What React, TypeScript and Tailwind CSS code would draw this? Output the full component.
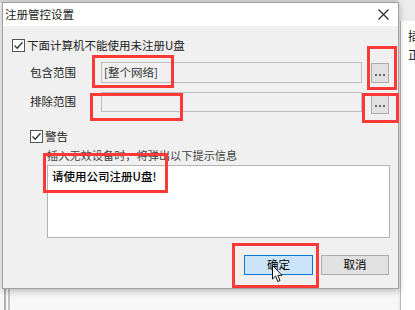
import React from "react";

const font = { fontFamily: '"Noto Sans CJK SC", "Noto Sans", sans-serif' };

function CheckBox() {
  return (
    <span className="flex h-[13px] w-[13px] shrink-0 items-center justify-center border border-[#555] bg-white">
      <svg width="11" height="11" viewBox="0 0 11 11">
        <path d="M1.5 5.5 L4.2 8.3 L9.5 2.2" fill="none" stroke="#333" strokeWidth="1.3" />
      </svg>
    </span>
  );
}

function DotsButton({ className }: { className: string }) {
  return (
    <div
      className={`flex w-[18px] shrink-0 items-end justify-center gap-[2px] border border-[#adadad] bg-[#e1e1e1] pb-[6px] ${className}`}
    >
      <span className="h-[2px] w-[2px] bg-[#666]" />
      <span className="h-[2px] w-[2px] bg-[#666]" />
      <span className="h-[2px] w-[2px] bg-[#666]" />
    </div>
  );
}

function RedBox({ className }: { className: string }) {
  return <div className={`pointer-events-none absolute border-[3px] border-[#ff3838] ${className}`} />;
}

export default function App() {
  return (
    <div className="relative h-[310px] w-[415px] overflow-hidden bg-[#f7f7f7]" style={font}>
      {/* desktop behind the dialog */}
      <div className="absolute left-0 top-0 h-[3px] w-[415px] bg-[#d6d6d6]" />
      <div className="absolute left-[398px] top-0 h-[310px] w-[17px] bg-[#ececec]" />
      <div className="absolute left-[400px] top-[21px] flex h-[289px] w-[15px] flex-col border-l border-[#b8b8b8] bg-white pl-[7px] pt-[5px] text-[12px] leading-[19px] text-[#222]">
        <span>插</span>
        <span>正</span>
      </div>
      <div className="absolute left-[4px] top-[288px] h-[22px] w-[2px] bg-[#b0b0b0]" />
      <div className="absolute left-[8px] top-[288px] h-[22px] w-[2px] bg-[#c4c4c4]" />

      {/* dialog */}
      <div className="absolute left-[2px] top-[2px] flex h-[287px] w-[397px] flex-col border border-[#a0a0a0] bg-[#f0f0f0] shadow-[0_2px_7px_rgba(0,0,0,0.28)]">
        <div className="flex h-[23px] shrink-0 items-center justify-between bg-white pl-[2px] pr-[9px]">
          <span className="text-[11.5px] text-[#222]">注册管控设置</span>
          <svg width="11" height="11" viewBox="0 0 11 11">
            <path d="M0.5 0.5 L10.5 10.5 M10.5 0.5 L0.5 10.5" stroke="#222" strokeWidth="1.1" />
          </svg>
        </div>

        <div className="flex flex-col text-[11.5px] text-[#222]">
          <div className="ml-[9px] mt-[13px] flex h-[13px] items-center gap-[2px]">
            <CheckBox />
            <span className="leading-none">下面计算机不能使用未注册U盘</span>
          </div>

          <div className="ml-[27px] mt-[10px] flex items-start">
            <span className="flex h-[21px] w-[71px] items-center">包含范围</span>
            <div className="flex h-[21px] w-[261px] items-center border border-[#bdbdbd] bg-[#f0f0f0] pl-[2px] text-[11.5px] text-[#333]">
              [整个网络]
            </div>
            <DotsButton className="ml-[9px] mt-[1px] h-[20px]" />
          </div>

          <div className="ml-[27px] mt-[9px] flex items-start">
            <span className="flex h-[20px] w-[71px] items-center">排除范围</span>
            <div className="h-[20px] w-[261px] border border-[#bdbdbd] bg-[#f0f0f0]" />
            <DotsButton className="ml-[9px] mt-[3px] h-[19px]" />
          </div>

          <div className="ml-[27px] mt-[16px] flex h-[13px] items-center gap-[2px]">
            <CheckBox />
            <span className="leading-none">警告</span>
          </div>

          <span className="ml-[44px] mt-[5px] h-[14px] text-[11.2px] leading-[14px] text-[#444]">
            插入无效设备时，将弹出以下提示信息
          </span>

          <div className="ml-[44px] mt-[3px] h-[73px] w-[343px] border border-[#b4b4b4] bg-white px-[4px] pt-[1px] text-[11.5px] font-medium leading-[18px] text-black">
            请使用公司注册U盘!
          </div>

          <div className="mt-[17px] flex">
            <div className="ml-[241px] flex h-[20px] w-[69px] items-center justify-center border border-[#0078d7] bg-[#cce4f7] text-black">
              确定
            </div>
            <div className="ml-[8px] flex h-[20px] w-[68px] items-center justify-center border border-[#adadad] bg-[#e1e1e1] text-black">
              取消
            </div>
          </div>
        </div>
      </div>

      {/* mouse pointer */}
      <svg className="absolute left-[272px] top-[265px]" width="12" height="18" viewBox="0 0 12 18">
        <path
          d="M0.5 0.5 L0.5 14 L3.6 11 L5.8 16.5 L8 15.6 L5.8 10.3 L10 10.3 Z"
          fill="white"
          stroke="#111"
          strokeWidth="1"
          strokeLinejoin="round"
        />
      </svg>

      {/* annotation boxes */}
      <RedBox className="left-[92px] top-[55px] h-[33px] w-[82px]" />
      <RedBox className="left-[367px] top-[46px] h-[44px] w-[30px]" />
      <RedBox className="left-[90px] top-[93px] h-[28px] w-[93px]" />
      <RedBox className="left-[362px] top-[93px] h-[30px] w-[37px]" />
      <RedBox className="left-[43px] top-[153px] h-[40px] w-[125px]" />
      <RedBox className="left-[232px] top-[243px] h-[45px] w-[87px]" />
    </div>
  );
}
